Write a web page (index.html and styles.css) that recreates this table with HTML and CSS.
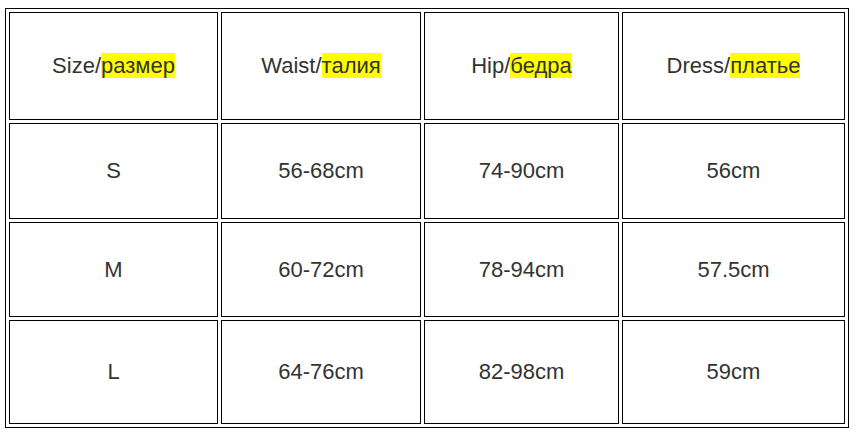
FILE: index.html
```html
<!DOCTYPE html>
<html>
<head>
<meta charset="utf-8">
<link rel="stylesheet" href="styles.css">
</head>
<body>
<div class="table">
  <div class="cell row-h"><span>Size/<span class="hl">размер</span></span></div>
  <div class="cell row-h"><span>Waist/<span class="hl">талия</span></span></div>
  <div class="cell row-h"><span>Hip/<span class="hl">бедра</span></span></div>
  <div class="cell row-h"><span>Dress/<span class="hl">платье</span></span></div>

  <div class="cell">S</div>
  <div class="cell">56-68cm</div>
  <div class="cell">74-90cm</div>
  <div class="cell">56cm</div>

  <div class="cell">M</div>
  <div class="cell">60-72cm</div>
  <div class="cell">78-94cm</div>
  <div class="cell">57.5cm</div>

  <div class="cell">L</div>
  <div class="cell">64-76cm</div>
  <div class="cell">82-98cm</div>
  <div class="cell">59cm</div>
</div>
</body>
</html>
```
FILE: styles.css
```css
html, body {
  margin: 0;
  background: #fff;
}
body {
  padding: 8px 0 0 5px;
  font-family: "Liberation Sans", Arial, sans-serif;
  font-size: 22px;
  color: #333;
}
.table {
  display: grid;
  width: max-content;
  grid-template-columns: 209px 200px 195px 223px;
  grid-template-rows: 108px 96px 95px 104px;
  gap: 3px;
  padding: 3px;
  border: 1px solid #000;
}
.cell {
  box-sizing: border-box;
  border: 1px solid #000;
  display: flex;
  align-items: center;
  justify-content: center;
  white-space: nowrap;
}
.hl {
  background: #ffff00;
}
```
